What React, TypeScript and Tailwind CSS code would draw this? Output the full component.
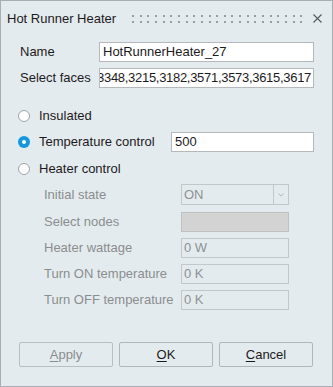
import React from 'react'

const font = "font-['Liberation_Sans',Arial,sans-serif]"

function Radio({ checked }: { checked?: boolean }) {
  if (checked) {
    return (
      <span className="w-[12px] h-[12px] rounded-full bg-[#1497dc] flex items-center justify-center">
        <span className="w-[4px] h-[4px] rounded-full bg-white" />
      </span>
    )
  }
  return <span className="w-[12px] h-[12px] rounded-full bg-white border border-[#9da3a8]" />
}

function Grip() {
  const dots = Array.from({ length: 23 }, (_, i) => i)
  return (
    <svg width="172" height="10" viewBox="0 0 172 10" className="block">
      {dots.map((i) => (
        <g key={i} fill="#9a9da0">
          <rect x={Math.round(i * 7.65)} y="0" width="2" height="2" />
          <rect x={Math.round(i * 7.65)} y="6" width="2" height="2" />
        </g>
      ))}
    </svg>
  )
}

function DisabledRow({ label, children, className = '' }: { label: string; children: React.ReactNode; className?: string }) {
  return (
    <div className={`flex items-center ${className}`}>
      <span className="w-[180px] shrink-0 pl-[43px] text-[#8b8d8f] whitespace-nowrap">{label}</span>
      {children}
    </div>
  )
}

function DisabledBox({ value, fill }: { value?: string; fill?: boolean }) {
  return (
    <div
      className={`w-[108px] h-[20px] border flex items-center pl-[2px] text-[#8f9194] ${
        fill ? 'bg-[#d3d3d3] border-[#bfc1c2]' : 'border-[#c3c7c9]'
      }`}
    >
      {value}
    </div>
  )
}

export default function App() {
  return (
    <div className={`w-[333px] h-[387px] bg-[#e4ebee] border border-[#a8aeb3] flex flex-col text-[13px] text-[#1c1a1c] ${font}`}>
      {/* title bar */}
      <div className="h-[36px] flex items-center pl-[6px] pr-[10px]">
        <span className="whitespace-nowrap">Hot Runner Heater</span>
        <div className="ml-[16px] mt-[1px]">
          <Grip />
        </div>
        <svg width="9" height="9" viewBox="0 0 9 9" className="ml-auto mb-[1px]">
          <path d="M0.5 0.5 L8.5 8.5 M8.5 0.5 L0.5 8.5" stroke="#555a5e" strokeWidth="1.1" />
        </svg>
      </div>

      <div className="flex flex-col pt-[5px]">
        <div className="flex items-center">
          <span className="w-[98px] shrink-0 pl-[19px]">Name</span>
          <div className="w-[215px] h-[20px] bg-white border border-[#b5b9bc] flex items-center pl-[3px]">
            HotRunnerHeater_27
          </div>
        </div>
        <div className="flex items-center mt-[6px]">
          <span className="w-[98px] shrink-0 pl-[19px] whitespace-nowrap">Select faces</span>
          {/* scrolled to the end, start of the list is clipped */}
          <div className="w-[215px] h-[20px] bg-white border border-[#b5b9bc] flex items-center justify-end overflow-hidden whitespace-nowrap pr-[2px] tracking-[-0.3px]">
            3348,3215,3182,3571,3573,3615,3617
          </div>
        </div>

        <div className="flex items-center h-[20px] mt-[18px] pl-[17px]">
          <Radio />
          <span className="ml-[9px]">Insulated</span>
        </div>
        <div className="flex items-center h-[20px] mt-[6px] pl-[17px]">
          <Radio checked />
          <span className="ml-[9px] w-[132px] shrink-0 whitespace-nowrap">Temperature control</span>
          <div className="w-[143px] h-[20px] bg-white border border-[#b5b9bc] flex items-center pl-[3px]">500</div>
        </div>
        <div className="flex items-center h-[20px] mt-[7px] pl-[17px]">
          <Radio />
          <span className="ml-[9px]">Heater control</span>
        </div>

        <DisabledRow label="Initial state" className="mt-[5px]">
          <div className="flex h-[21px]">
            <div className="w-[93px] border border-[#c3c7c9] flex items-center pl-[2px] text-[#8f9194]">ON</div>
            <div className="w-[15px] border border-l-0 border-[#c3c7c9] flex items-center justify-center">
              <svg width="6" height="4" viewBox="0 0 6 4">
                <path d="M0.5 0.5 L3 3 L5.5 0.5" fill="none" stroke="#b4b7b9" strokeWidth="1" />
              </svg>
            </div>
          </div>
        </DisabledRow>
        <DisabledRow label="Select nodes" className="mt-[7px]">
          <DisabledBox fill />
        </DisabledRow>
        <DisabledRow label="Heater wattage" className="mt-[6px]">
          <DisabledBox value="0 W" />
        </DisabledRow>
        <DisabledRow label="Turn ON temperature" className="mt-[6px]">
          <DisabledBox value="0 K" />
        </DisabledRow>
        <DisabledRow label="Turn OFF temperature" className="mt-[6px]">
          <DisabledBox value="0 K" />
        </DisabledRow>
      </div>

      <div className="flex gap-[6px] pl-[18px] mt-[32px]">
        <button className="w-[94px] h-[25px] border border-[#b9bec2] rounded-[2px] text-[#8b8d8f]">
          <span className="underline underline-offset-[2px]">A</span>pply
        </button>
        <button className="w-[94px] h-[25px] border border-[#b0b6ba] rounded-[2px]">
          <span className="underline underline-offset-[2px]">O</span>K
        </button>
        <button className="w-[94px] h-[25px] border border-[#b0b6ba] rounded-[2px]">
          <span className="underline underline-offset-[2px]">C</span>ancel
        </button>
      </div>
    </div>
  )
}
